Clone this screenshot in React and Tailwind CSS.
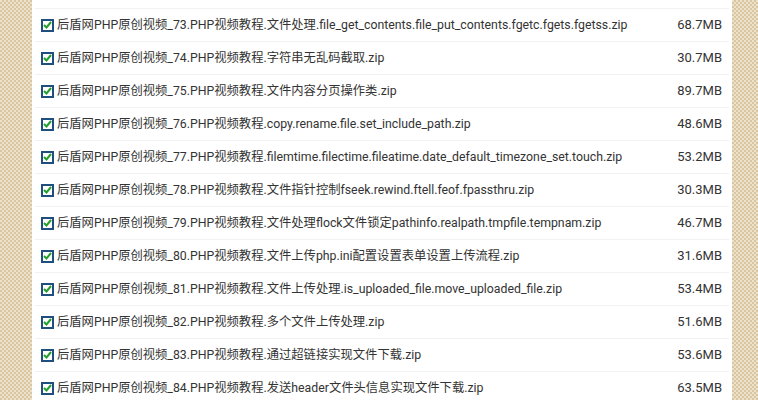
const files = [
  ['73', '文件处理.file_get_contents.file_put_contents.fgetc.fgets.fgetss.zip', '68.7MB'],
  ['74', '字符串无乱码截取.zip', '30.7MB'],
  ['75', '文件内容分页操作类.zip', '89.7MB'],
  ['76', 'copy.rename.file.set_include_path.zip', '48.6MB'],
  ['77', 'filemtime.filectime.fileatime.date_default_timezone_set.touch.zip', '53.2MB'],
  ['78', '文件指针控制fseek.rewind.ftell.feof.fpassthru.zip', '30.3MB'],
  ['79', '文件处理flock文件锁定pathinfo.realpath.tmpfile.tempnam.zip', '46.7MB'],
  ['80', '文件上传php.ini配置设置表单设置上传流程.zip', '31.6MB'],
  ['81', '文件上传处理.is_uploaded_file.move_uploaded_file.zip', '53.4MB'],
  ['82', '多个文件上传处理.zip', '51.6MB'],
  ['83', '通过超链接实现文件下载.zip', '53.6MB'],
  ['84', '发送header文件头信息实现文件下载.zip', '63.5MB'],
];

function CheckBox() {
  return (
    <span className="flex h-[13px] w-[13px] shrink-0 items-center justify-center border-2 border-[#1f4f7f] bg-white">
      <svg width="9" height="8" viewBox="0 0 9 8">
        <path d="M1 4 L3.5 6.5 L8 1" fill="none" stroke="#22a02a" strokeWidth="2" />
      </svg>
    </span>
  );
}

export default function App() {
  return (
    <div className="flex h-[400px] w-[758px] overflow-hidden bg-[repeating-conic-gradient(#dac7a2_0_25%,#ece1ca_0_50%)] bg-[length:4px_4px] font-['Roboto','Noto_Sans_CJK_SC',sans-serif] text-[12.3px] text-[#333]">
      <div className="ml-[32px] w-[700px] shrink-0 bg-white pt-[8px] pl-[3px] pr-[3px]">
        {files.map(([num, name, size]) => (
          <div key={num} className="flex h-[33px] items-center border-t border-[#f2f2f2] pl-[6px] pr-[7px]">
            <CheckBox />
            <span className="ml-[3px] flex-1 whitespace-nowrap">
              后盾网PHP原创视频_{num}.PHP视频教程.{name}
            </span>
            <span className="shrink-0 text-[13px]">{size}</span>
          </div>
        ))}
      </div>
    </div>
  );
}
